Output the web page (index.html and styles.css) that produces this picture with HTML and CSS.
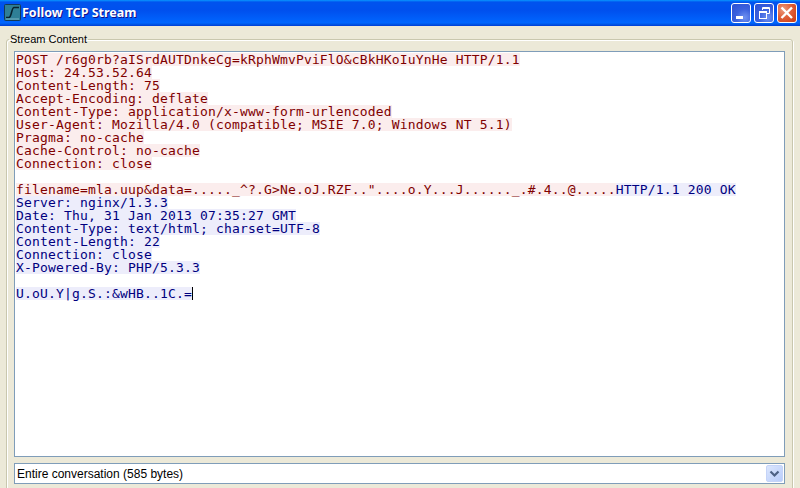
FILE: index.html
```html
<!DOCTYPE html>
<html lang="en">
<head>
<meta charset="utf-8">
<title>Follow TCP Stream</title>
<link rel="stylesheet" href="styles.css">
</head>
<body>
<div class="window">
  <header class="titlebar">
    <svg class="app-icon" width="17" height="17" viewBox="0 0 17 17">
      <rect x="0.5" y="0.5" width="16" height="16" rx="1" fill="#2f7f96" stroke="#123a58"/>
      <path d="M2 13.5H5C7.5 13.5 7.5 3.5 10 3.5H15" fill="none" stroke="#08222e" stroke-width="1.6"/>
      <path d="M2 15H15" stroke="#7fb6c4" stroke-width="1"/>
    </svg>
    <span class="title">Follow TCP Stream</span>
    <div class="controls">
      <div class="winbtn">
        <svg width="18" height="18" viewBox="0 0 18 18"><rect x="4" y="12" width="7" height="3" fill="#fff"/></svg>
      </div>
      <div class="winbtn">
        <svg width="18" height="18" viewBox="0 0 18 18" fill="none" stroke="#fff"><path d="M7.5 6V3.5h7v6H12"/><path d="M7 4.5h8"/><rect x="4.5" y="7.5" width="7" height="7"/><path d="M4 8.5h8"/></svg>
      </div>
      <div class="winbtn close">
        <svg width="18" height="18" viewBox="0 0 18 18"><path d="M3.5 3.5L14 14M14 3.5L3.5 14" stroke="#fff" stroke-width="2.4" fill="none"/></svg>
      </div>
    </div>
  </header>
  <main class="content">
    <fieldset class="group">
      <legend class="group-label">Stream Content</legend>
      <div class="stream">
        <div class="line"><span class="client">POST /r6g0rb?aISrdAUTDnkeCg=kRphWmvPviFlO&amp;cBkHKoIuYnHe HTTP/1.1</span></div>
        <div class="line"><span class="client">Host: 24.53.52.64</span></div>
        <div class="line"><span class="client">Content-Length: 75</span></div>
        <div class="line"><span class="client">Accept-Encoding: deflate</span></div>
        <div class="line"><span class="client">Content-Type: application/x-www-form-urlencoded</span></div>
        <div class="line"><span class="client">User-Agent: Mozilla/4.0 (compatible; MSIE 7.0; Windows NT 5.1)</span></div>
        <div class="line"><span class="client">Pragma: no-cache</span></div>
        <div class="line"><span class="client">Cache-Control: no-cache</span></div>
        <div class="line"><span class="client">Connection: close</span></div>
        <div class="line"></div>
        <div class="line"><span class="client">filename=mla.uup&amp;data=....._^?.G&gt;Ne.oJ.RZF.."....o.Y...J......_.#.4..@.....</span><span class="server">HTTP/1.1 200 OK</span></div>
        <div class="line"><span class="server">Server: nginx/1.3.3</span></div>
        <div class="line"><span class="server">Date: Thu, 31 Jan 2013 07:35:27 GMT</span></div>
        <div class="line"><span class="server">Content-Type: text/html; charset=UTF-8</span></div>
        <div class="line"><span class="server">Content-Length: 22</span></div>
        <div class="line"><span class="server">Connection: close</span></div>
        <div class="line"><span class="server">X-Powered-By: PHP/5.3.3</span></div>
        <div class="line"></div>
        <div class="line"><span class="server">U.oU.Y|g.S.:&amp;wHB..1C.=</span><span class="caret"></span></div>
      </div>
      <div class="combo">
        <span class="combo-text">Entire conversation (585 bytes)</span>
        <div class="combo-arrow">
          <svg width="15" height="15" viewBox="0 0 15 15"><path d="M3.5 5.5L7.5 9.5L11.5 5.5" fill="none" stroke="#4d6185" stroke-width="2.2"/></svg>
        </div>
      </div>
    </fieldset>
  </main>
</div>
</body>
</html>
```
FILE: styles.css
```css
* { box-sizing: border-box; }
html, body { margin: 0; padding: 0; height: 100%; overflow: hidden; }
body { background: #ece9d8; }

.window {
  width: 800px;
  height: 488px;
  display: flex;
  flex-direction: column;
  overflow: hidden;
  font-family: "Liberation Sans", sans-serif;
}

.titlebar {
  flex: 0 0 26px;
  display: flex;
  align-items: center;
  padding: 0 3px 1px 4px;
  background: linear-gradient(180deg, #0997ff 0, #0053ee 8%, #0050ee 40%, #0066ff 88%, #0058e6 93%, #003dd7 100%);
}
.app-icon { flex: none; }
.title {
  margin-left: 1px;
  color: #fff;
  font-family: "Noto Sans", sans-serif;
  font-weight: 700;
  font-size: 12.5px;
  text-shadow: 1px 1px 0 #0f1089;
}
.controls { margin-left: auto; display: flex; gap: 3px; }
.winbtn {
  width: 20px;
  height: 20px;
  border: 1px solid #fff;
  border-radius: 3px;
  background: radial-gradient(circle at 70% 75%, #6f92f0 0, #3c62de 45%, #2b4fd2 100%);
  display: flex;
  align-items: center;
  justify-content: center;
}
.winbtn.close { background: radial-gradient(circle at 30% 30%, #ea9c7f 0, #e0603a 45%, #c93a12 100%); }

.content { flex: 1 1 auto; padding: 7px 7px 0 6px; min-height: 0; }

.group {
  margin: 0;
  padding: 5px 7px 0 7px;
  height: 480px;
  border: 1px solid #c9c7ae;
  border-radius: 3px;
  box-shadow: inset 1px 1px 0 #fff, 1px 1px 0 #fff;
}
.group-label {
  margin-left: -5px;
  padding: 0 1px;
  font-size: 11px;
  line-height: 13px;
  color: #000;
}

.stream {
  height: 406px;
  padding: 1px 0 0 1px;
  background: #fff;
  border: 1px solid #7f9db9;
  font-family: "DejaVu Sans Mono", monospace;
  font-size: 13px;
  letter-spacing: 0.17px;
  line-height: 13px;
  isolation: isolate;
}
.line { height: 13px; display: flex; white-space: pre; }
.client, .server { display: block; height: 13px; position: relative; }
.client::before, .server::before {
  content: "";
  position: absolute;
  inset: 0;
  z-index: -1;
}
.client { color: #7f0000; }
.client::before { background: #fbeded; }
.server { color: #00007f; }
.server::before { background: #ededfb; }
.caret { display: block; width: 1px; height: 13px; background: #000; }

.combo {
  margin-top: 6px;
  height: 21px;
  display: flex;
  align-items: center;
  justify-content: space-between;
  background: #fff;
  border: 1px solid #7f9db9;
  padding: 0 1px 0 2px;
}
.combo-text { font-size: 12px; color: #000; }
.combo-arrow {
  width: 17px;
  height: 17px;
  border-radius: 2px;
  background: linear-gradient(135deg, #dbe6fd 0, #b9cdfb 100%);
  border: 1px solid #c5d4f8;
  display: flex;
  align-items: center;
  justify-content: center;
}
```
